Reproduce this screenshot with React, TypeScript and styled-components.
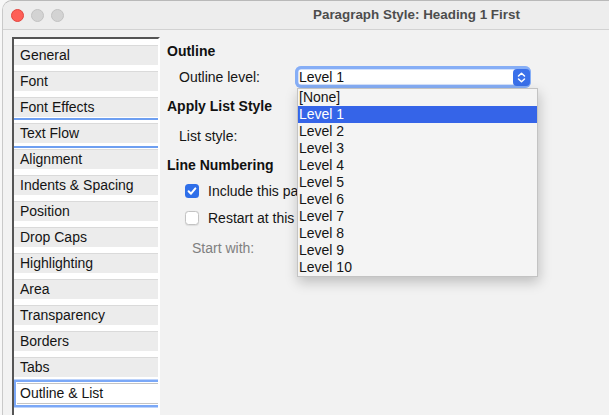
import React from 'react';
import styled, { createGlobalStyle, css } from 'styled-components';

const Global = createGlobalStyle`
  html, body { margin: 0; padding: 0; background: #f7f7f7; }
  body { font-family: "Liberation Sans", Arial, sans-serif; }
  * { box-sizing: border-box; }
`;

const Screen = styled.div`
  width: 609px;
  height: 415px;
  overflow: hidden;
  background: #f7f7f7;
  padding-left: 2px;
`;

const Window = styled.div`
  width: 640px;
  height: 100%;
  display: flex;
  flex-direction: column;
  border-left: 1px solid #c9c9c9;
  border-top: 1px solid #b9b9b9;
  border-top-left-radius: 10px;
  background: #f2f2f2;
  overflow: hidden;
`;

const TitleBar = styled.div`
  height: 29px;
  flex: none;
  display: flex;
  align-items: center;
  padding-left: 7.5px;
  background: #ededed;
  border-bottom: 1px solid #d2d2d2;
`;

const Lights = styled.div`
  display: flex;
  gap: 7px;
`;

const Light = styled.span<{ $red?: boolean }>`
  width: 13px;
  height: 13px;
  border-radius: 50%;
  background: ${p => (p.$red ? '#fe5f57' : '#d3d3d3')};
  border: 0.5px solid ${p => (p.$red ? '#e1463f' : '#c2c2c2')};
`;

const Title = styled.span`
  margin-left: 249.5px;
  font-weight: bold;
  font-size: 13.4px;
  color: #4d4d4d;
  margin-top: -1px;
`;

const Body = styled.div`
  flex: 1;
  min-height: 0;
  display: flex;
  padding: 7px 0 0 9px;
`;

const Sidebar = styled.div`
  width: 148px;
  flex: none;
  background: #fff;
  border-top: 2px solid #555;
  border-left: 2px solid #555;
  border-right: 2px solid #fff;
  overflow: hidden;
  display: flex;
  flex-direction: column;
`;

const Item = styled.div<{ $hover?: boolean; $selected?: boolean }>`
  position: relative;
  flex: none;
  height: 20px;
  margin-top: 6px;
  margin-right: -10px;
  padding-left: 6px;
  border-top: 1px solid #dadada;
  background: #ececec;
  font-size: 14px;
  line-height: 19px;
  color: #141414;
  white-space: nowrap;
  ${p =>
    p.$hover &&
    css`
      &::before,
      &::after {
        content: '';
        position: absolute;
        left: 0;
        right: 0;
        height: 2px;
        background: #6e9ff1;
      }
      &::before { top: -6px; }
      &::after { bottom: -5px; }
    `}
  ${p =>
    p.$selected &&
    css`
      height: 21px;
      margin-left: 3px;
      padding-left: 3px;
      background: #fff;
      border-top: 1px solid #c4c4c4;
      border-bottom: 1px solid #c4c4c4;
      line-height: 19px;
      box-shadow: 0 0 0 1px #fff, 0 0 0 3.5px #7ba8f7;
    `}
`;

const Panel = styled.div`
  flex: 1;
  position: relative;
  padding: 6px 0 0 7px;
  display: flex;
  flex-direction: column;
  color: #151515;
  font-size: 14px;
`;

const Heading = styled.div<{ $gap?: number }>`
  font-weight: bold;
  line-height: 16px;
  color: #111;
  margin-top: ${p => p.$gap ?? 0}px;
`;

const FieldRow = styled.div<{ $gap: number; $indent: number; $muted?: boolean }>`
  display: flex;
  align-items: center;
  height: 22px;
  margin-top: ${p => p.$gap}px;
  padding-left: ${p => p.$indent}px;
  color: ${p => (p.$muted ? '#808080' : '#151515')};
  white-space: nowrap;
`;

const Label = styled.span`
  width: 116px;
  flex: none;
  line-height: 16px;
`;

const CheckRow = styled.div<{ $gap: number }>`
  display: flex;
  align-items: center;
  gap: 9px;
  height: 18px;
  margin-top: ${p => p.$gap}px;
  padding-left: 18px;
  white-space: nowrap;
  line-height: 16px;
`;

const CheckText = styled.span`
  width: 89px;
  overflow: hidden;
`;

const Box = styled.span<{ $checked?: boolean }>`
  width: 14px;
  height: 14px;
  flex: none;
  border-radius: 3.5px;
  display: flex;
  align-items: center;
  justify-content: center;
  background: ${p => (p.$checked ? '#2f6fe9' : '#fff')};
  border: ${p => (p.$checked ? 'none' : '1px solid #c3c3c3')};
  box-shadow: ${p => (p.$checked ? 'none' : '0 0.5px 1px rgba(0,0,0,0.08)')};
`;

const SelectWrap = styled.div`
  position: relative;
  width: 236px;
  height: 22px;
`;

const SelectField = styled.div`
  height: 22px;
  border-radius: 6px;
  background: #fff;
  box-shadow: inset 0 0 0 3px #86aef6, inset 0 0 0 3.5px #aac5f8;
  padding-left: 4px;
  line-height: 22px;
  color: #111;
`;

const Stepper = styled.span`
  position: absolute;
  right: 1px;
  top: 3px;
  width: 17px;
  height: 17px;
  border-radius: 4px;
  background: #3a70ea;
  display: flex;
  align-items: center;
  justify-content: center;
`;

const Dropdown = styled.div`
  position: absolute;
  top: 22px;
  left: 2px;
  width: 241px;
  z-index: 10;
  background: #f4f4f4;
  border: 1px solid #c3c3c3;
  box-shadow: 1px 5px 12px rgba(0, 0, 0, 0.22);
`;

const Option = styled.div<{ $active?: boolean }>`
  height: 17px;
  line-height: 17px;
  padding-left: 1px;
  font-size: 14px;
  color: ${p => (p.$active ? '#fff' : '#141414')};
  background: ${p => (p.$active ? '#3564e8' : 'transparent')};
`;

const pages = [
  'General',
  'Font',
  'Font Effects',
  'Text Flow',
  'Alignment',
  'Indents & Spacing',
  'Position',
  'Drop Caps',
  'Highlighting',
  'Area',
  'Transparency',
  'Borders',
  'Tabs',
  'Outline & List',
];

const levels = ['[None]', 'Level 1', 'Level 2', 'Level 3', 'Level 4', 'Level 5', 'Level 6', 'Level 7', 'Level 8', 'Level 9', 'Level 10'];

export default function App() {
  return (
    <>
      <Global />
      <Screen>
        <Window>
          <TitleBar>
            <Lights>
              <Light $red />
              <Light />
              <Light />
            </Lights>
            <Title>Paragraph Style: Heading 1 First</Title>
          </TitleBar>
          <Body>
            <Sidebar>
              {pages.map(p => (
                <Item key={p} $hover={p === 'Text Flow'} $selected={p === 'Outline & List'}>
                  {p}
                </Item>
              ))}
            </Sidebar>
            <Panel>
              <Heading>Outline</Heading>
              <FieldRow $gap={7} $indent={12}>
                <Label>Outline level:</Label>
                <SelectWrap>
                  <SelectField>Level 1</SelectField>
                  <Stepper>
                    <svg width="17" height="17" viewBox="0 0 17 17" fill="none" stroke="#fff" strokeWidth="1.5" strokeLinecap="round" strokeLinejoin="round">
                      <path d="M5.5 7 L8.5 4.2 L11.5 7" />
                      <path d="M5.5 10 L8.5 12.8 L11.5 10" />
                    </svg>
                  </Stepper>
                  <Dropdown>
                    {levels.map(l => (
                      <Option key={l} $active={l === 'Level 1'}>
                        {l}
                      </Option>
                    ))}
                  </Dropdown>
                </SelectWrap>
              </FieldRow>
              <Heading $gap={10}>Apply List Style</Heading>
              <FieldRow $gap={11} $indent={12}>
                <Label>List style:</Label>
              </FieldRow>
              <Heading $gap={10}>Line Numbering</Heading>
              <CheckRow $gap={9}>
                <Box $checked>
                  <svg width="14" height="14" viewBox="0 0 14 14" fill="none" stroke="#fff" strokeWidth="2" strokeLinecap="round" strokeLinejoin="round">
                    <path d="M3.6 7.3 L6 9.7 L10.4 4.4" />
                  </svg>
                </Box>
                <CheckText>Include this paragraph in line numbering</CheckText>
              </CheckRow>
              <CheckRow $gap={9}>
                <Box />
                <CheckText>Restart at this paragraph</CheckText>
              </CheckRow>
              <FieldRow $gap={10} $indent={25} $muted>
                <Label>Start with:</Label>
              </FieldRow>
            </Panel>
          </Body>
        </Window>
      </Screen>
    </>
  );
}
